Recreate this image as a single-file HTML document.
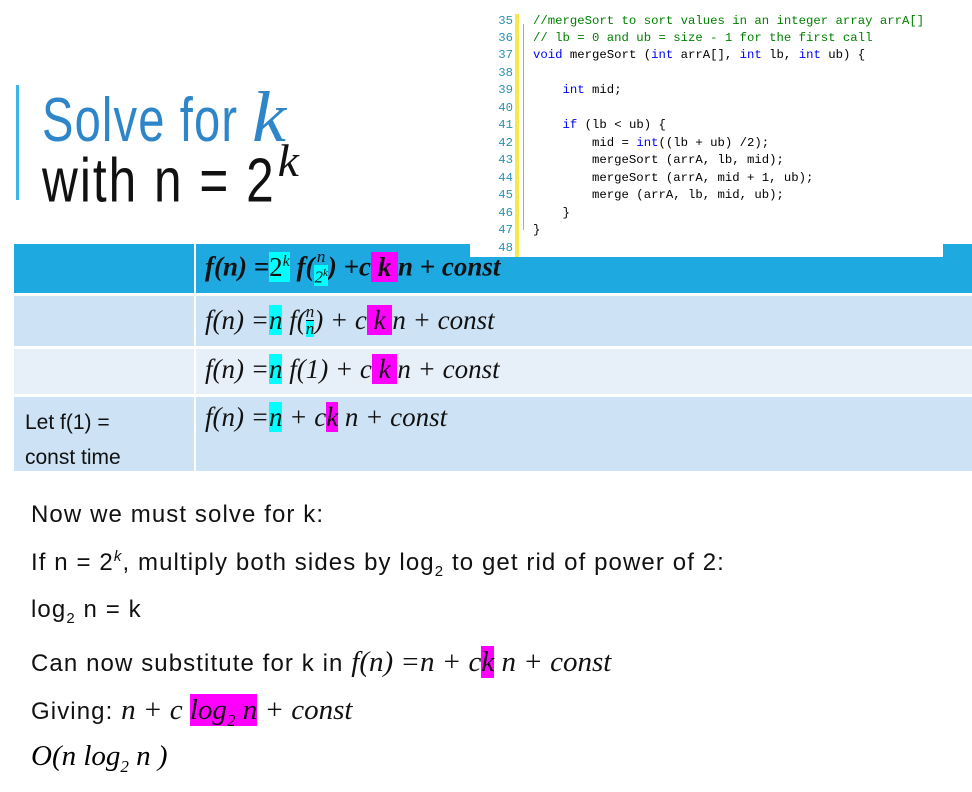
<!DOCTYPE html>
<html><head><meta charset="utf-8"><style>
body{margin:0;width:972px;height:792px;background:#fff;position:relative;overflow:hidden;font-family:"Liberation Sans",sans-serif}
.a{position:absolute;white-space:nowrap}
.code{position:absolute;left:470px;top:0;width:473px;height:257px;background:#fff;font-family:"Liberation Mono",monospace;font-size:12.3px}
.ln{position:absolute;left:22px;width:21px;text-align:right;color:#2b91af}
.cl{position:absolute;left:63px;color:#000;white-space:pre}
.g{color:#008000}.b{color:#0000ff}
.m{font-family:"Liberation Serif",serif;font-style:italic;font-size:27px;letter-spacing:0}
.bm{font-size:29px}
.cy{background:#00ffff}.mg{background:#ff00ff}
.t{font-size:24px;color:#111;letter-spacing:1.1px}
.fr{display:inline-block;vertical-align:middle;text-align:center;font-size:17px;line-height:16px;position:relative;top:-2px}
.fr span{display:block}
.fr .n{border-bottom:1.5px solid #111}
</style></head><body>
<div class="a" style="left:16px;top:85px;width:3px;height:115px;background:#3cb4e5"></div>
<div class="a" style="left:42px;top:76px;font-size:62px;color:#2e86c8;transform:scaleX(.76);transform-origin:left;letter-spacing:1.5px">Solve for <span style="font-family:'Liberation Serif',serif;font-style:italic;font-size:72px;display:inline-block;transform:scaleX(1.4);margin-left:6px">k</span></div>
<div class="a" style="left:42px;top:138px;font-size:62px;color:#111;transform:scaleX(.8);transform-origin:left;letter-spacing:2.5px">with n = 2<sup style="font-family:'Liberation Serif',serif;font-style:italic;font-size:46px;position:relative;top:-4px;display:inline-block;transform:scaleX(1.3);margin-left:6px">k</sup></div>

<div class="a" style="left:14px;top:244px;width:180px;height:49px;background:#1fa9e1"></div>
<div class="a" style="left:196px;top:244px;width:776px;height:49px;background:#1fa9e1"></div>
<div class="a" style="left:14px;top:296px;width:180px;height:50px;background:#cde2f4"></div>
<div class="a" style="left:196px;top:296px;width:776px;height:50px;background:#cde2f4"></div>
<div class="a" style="left:14px;top:349px;width:180px;height:45px;background:#e7f0f9"></div>
<div class="a" style="left:196px;top:349px;width:776px;height:45px;background:#e7f0f9"></div>
<div class="a" style="left:14px;top:397px;width:180px;height:74px;background:#cde2f4"></div>
<div class="a" style="left:196px;top:397px;width:776px;height:74px;background:#cde2f4"></div>

<div class="a m" style="left:205px;top:251px;font-weight:bold;color:#111">f(n) =<span class="cy" style="font-style:normal;font-weight:normal">2<sup style="font-size:16px;font-style:italic">k</sup></span> f(<span class="fr" style="font-weight:normal"><span class="n" style="border:0">n</span><span class="cy">2<sup style="font-size:11px">k</sup></span></span>) +c<span class="mg"> k </span>n + const</div>
<div class="a m" style="left:205px;top:305px;color:#111">f(n) =<span class="cy">n</span> f(<span class="fr"><span class="n">n</span><span class="cy">n</span></span>) + c<span class="mg"> k </span>n + const</div>
<div class="a m" style="left:205px;top:354px;color:#111">f(n) =<span class="cy">n</span> f(1) + c<span class="mg"> k </span>n + const</div>
<div class="a m" style="left:205px;top:402px;color:#111">f(n) =<span class="cy">n</span> + c<span class="mg">k</span> n + const</div>
<div class="a" style="left:25px;top:405px;font-size:21px;color:#111;line-height:35px">Let f(1) =<br>const time</div>

<div class="code">
<div class="a" style="left:45px;top:14px;width:4px;height:243px;background:#f5e94f"></div>
<div class="a" style="left:53px;top:24px;width:1px;height:206px;background:#aaa"></div>
<div class="ln" style="top:14px">35</div><div class="cl g" style="top:14px">//mergeSort to sort values in an integer array arrA[]</div>
<div class="ln" style="top:31px">36</div><div class="cl g" style="top:31px">// lb = 0 and ub = size - 1 for the first call</div>
<div class="ln" style="top:48px">37</div><div class="cl" style="top:48px"><span class="b">void</span> mergeSort (<span class="b">int</span> arrA[], <span class="b">int</span> lb, <span class="b">int</span> ub) {</div>
<div class="ln" style="top:66px">38</div>
<div class="ln" style="top:83px">39</div><div class="cl" style="top:83px">    <span class="b">int</span> mid;</div>
<div class="ln" style="top:101px">40</div>
<div class="ln" style="top:118px">41</div><div class="cl" style="top:118px">    <span class="b">if</span> (lb &lt; ub) {</div>
<div class="ln" style="top:136px">42</div><div class="cl" style="top:136px">        mid = <span class="b">int</span>((lb + ub) /2);</div>
<div class="ln" style="top:153px">43</div><div class="cl" style="top:153px">        mergeSort (arrA, lb, mid);</div>
<div class="ln" style="top:171px">44</div><div class="cl" style="top:171px">        mergeSort (arrA, mid + 1, ub);</div>
<div class="ln" style="top:188px">45</div><div class="cl" style="top:188px">        merge (arrA, lb, mid, ub);</div>
<div class="ln" style="top:206px">46</div><div class="cl" style="top:206px">    }</div>
<div class="ln" style="top:223px">47</div><div class="cl" style="top:223px">}</div>
<div class="ln" style="top:241px">48</div>
</div>

<div class="a t" style="left:31px;top:501px">Now we must solve for k:</div>
<div class="a t" style="left:31px;top:548px">If n = 2<sup style="font-size:15px;font-style:italic">k</sup>, multiply both sides by log<sub style="font-size:15px">2</sub> to get rid of power of 2:</div>
<div class="a t" style="left:31px;top:596px">log<sub style="font-size:15px">2</sub> n = k</div>
<div class="a t" style="left:31px;top:646px">Can now substitute for k in <span class="m bm">f(n) =n + c<span class="mg">k</span> n + const</span></div>
<div class="a t" style="left:31px;top:694px">Giving: <span class="m bm">n + c <span class="mg">log<sub style="font-size:17px">2</sub> n</span>  + const</span></div>
<div class="a m bm" style="left:31px;top:740px">O(n log<sub style="font-size:17px">2</sub> n )</div>
</body></html>
